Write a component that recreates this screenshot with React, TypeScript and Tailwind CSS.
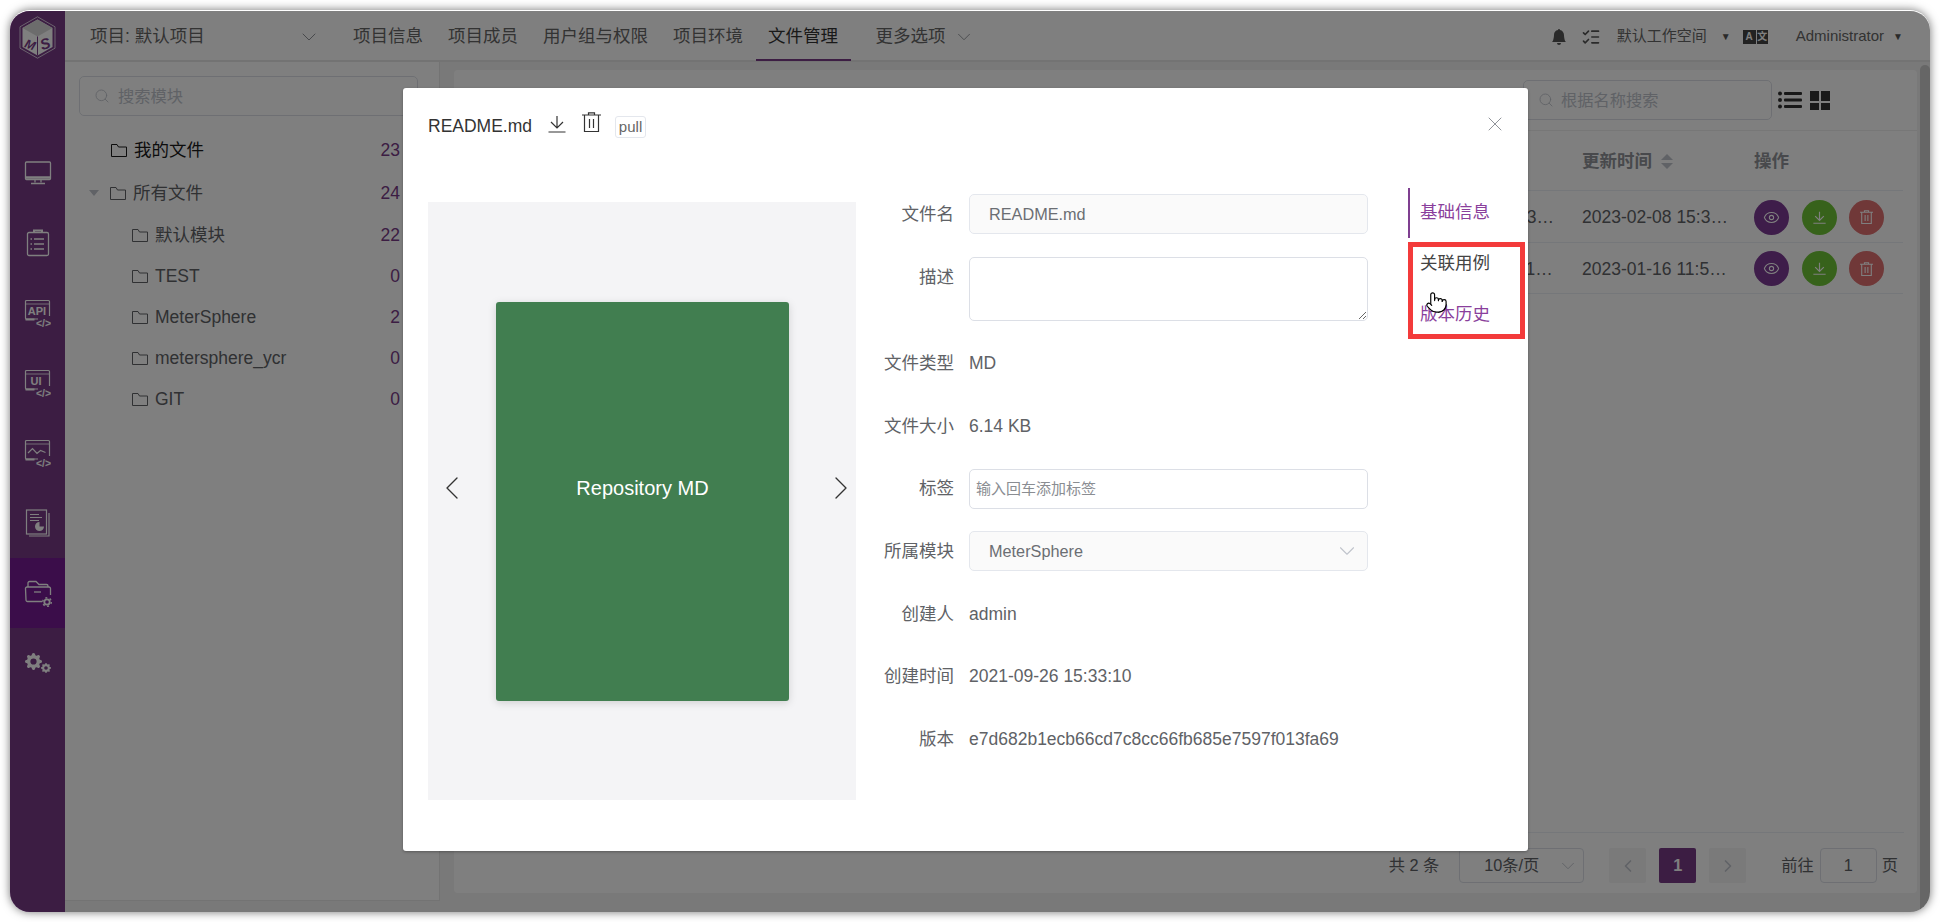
import React from "react";
import { ChevronDown, ChevronLeft, ChevronRight, Eye, ListChecks, Pointer, Search, X } from "lucide-react";
import { BsBellFill, BsGearFill } from "react-icons/bs";

const Frame = ({ children }: { children?: React.ReactNode }) => (
  <svg width="28" height="28" viewBox="0 0 28 28" fill="none" stroke="white" strokeWidth="1.2" className="-ml-[2px]">
    <path d="M15 20H3.5a1 1 0 0 1-1-1V2.500a1 1 0 0 1 1-1h22a1 1 0 0 1 1 1V17" />
    <path d="M2.500 5h24" strokeWidth="0.8" />
    <path d="M2.500 20.500h9" strokeWidth="2" />
    {children}
    <text x="20.500" y="27.500" fontSize="10.500" fontWeight="700" fill="white" stroke="none" textAnchor="middle" fontFamily="Liberation Sans">&lt;/&gt;</text>
  </svg>
);

const navIcons: React.ReactNode[] = [
  <svg width="28" height="24" viewBox="0 0 28 24" fill="none" stroke="white" strokeWidth="1.300">
    <rect x="1.500" y="1" width="25" height="17.500" rx="1" />
    <path d="M1.500 16.500h25" strokeWidth="2.500" />
    <path d="M11 19v2.500M17 19v2.500" />
    <path d="M7 22.500h14" />
  </svg>,
  <svg width="24" height="28" viewBox="0 0 24 28" fill="none" stroke="white" strokeWidth="1.300">
    <rect x="1.500" y="3.500" width="21" height="23" rx="1.500" />
    <path d="M8 3.500V1.500h8v2" strokeWidth="2" />
    <path d="M8 10h10M8 15h10M8 20h10M4.500 10h1.500M4.500 15h1.500M4.500 20h1.500" />
  </svg>,
  <Frame>
    <text x="14" y="15.500" fontSize="11" fontWeight="700" fill="white" stroke="none" textAnchor="middle" fontFamily="Liberation Sans">API</text>
  </Frame>,
  <Frame>
    <text x="13" y="15.500" fontSize="11" fontWeight="700" fill="white" stroke="none" textAnchor="middle" fontFamily="Liberation Sans">UI</text>
  </Frame>,
  <Frame>
    <path d="M5 14l4.500-4.500 4.500 5 3.500-3 5 2" />
  </Frame>,
  <svg width="26" height="28" viewBox="0 0 26 28" fill="none" stroke="white" strokeWidth="1.200">
    <rect x="1.500" y="1" width="20" height="24" />
    <path d="M24 4v23H4" />
    <path d="M5 5.500h9M5 8.500h12M5 11.500h9" />
    <path d="M14.500 13v4.500h4.500a4.500 4.500 0 1 1-4.500-4.500z" fill="white" stroke="none" />
  </svg>,
  <svg width="28" height="28" viewBox="0 0 28 28" fill="none" stroke="white" strokeWidth="1.300">
    <path d="M4 8V4a1.500 1.500 0 0 1 1.500-1.500H12l3 3h7.500A1.500 1.500 0 0 1 24 7v1" />
    <path d="M18 22.500H3.500A1.500 1.500 0 0 1 2 21L1.500 9.500A1.500 1.500 0 0 1 3 8h22a1.500 1.500 0 0 1 1.500 1.500V16" />
    <path d="M10 13h7" />
    <circle cx="23" cy="23" r="2.700" strokeWidth="1.800" />
    <circle cx="23" cy="23" r="4.300" strokeWidth="1.400" strokeDasharray="2 2.500" />
  </svg>,
  <div className="flex items-end">
    <BsGearFill size={17} className="text-white mb-[3px]" />
    <BsGearFill size={10} className="text-white -ml-[1px]" />
  </div>,
];

const Folder = ({ cls }: { cls: string }) => (
  <svg width="16" height="13" viewBox="0 0 16 13" fill="none" stroke="currentColor" strokeWidth="1" className={cls}>
    <path d="M.5 12.500V.5h5.500l1.500 2.500h8v9.500z" />
  </svg>
);

const DownloadGlyph = ({ size, color, sw }: { size: number; color: string; sw: number }) => (
  <svg width={size} height={size} viewBox="0 0 18 18" fill="none" stroke={color} strokeWidth={sw}>
    <path d="M9 1v11M3 7l6 6 6-6M.5 17h17" />
  </svg>
);

const TrashGlyph = ({ w, h, color, sw }: { w: number; h: number; color: string; sw: number }) => (
  <svg width={w} height={h} viewBox="0 0 19 20" fill="none" stroke={color} strokeWidth={sw}>
    <path d="M0 3h19M6.500 3V.8h6V3M2.500 3v16.500h14V3M7.500 7v9M11.500 7v9" />
  </svg>
);

const topNav = [
  { t: "项目信息" },
  { t: "项目成员" },
  { t: "用户组与权限" },
  { t: "项目环境" },
  { t: "文件管理", active: true },
];

const tree = [
  { name: "我的文件", n: "23", top: true, h: "h-[42px]" },
  { name: "所有文件", n: "24", caret: true, h: "h-[44px]" },
  { name: "默认模块", n: "22", child: true, h: "h-[41px]" },
  { name: "TEST", n: "0", child: true, h: "h-[41px]" },
  { name: "MeterSphere", n: "2", child: true, h: "h-[41px]" },
  { name: "metersphere_ycr", n: "0", child: true, h: "h-[41px]" },
  { name: "GIT", n: "0", child: true, h: "h-[41px]" },
];

const rows = [
  { a: "2023-02-08 15:33:21", b: "2023-02-08 15:33:21" },
  { a: "2023-01-16 11:15:02", b: "2023-01-16 11:54:09" },
];

const FormRow = ({ label, children, cls = "h-[40px]" }: { label: string; children: React.ReactNode; cls?: string }) => (
  <div className={`flex mb-[22.600px] ${cls}`}>
    <div className="w-[98px] text-right text-[17.500px] leading-[40px] text-[#606266] whitespace-nowrap">{label}</div>
    <div className="ml-[15px] w-[399px] text-[17.500px] leading-[40px] text-[#606266]">{children}</div>
  </div>
);

export default function App() {
  return (
    <div className="w-[1940px] h-[922px] bg-white pt-[10px] px-[10px] overflow-hidden font-['Liberation_Sans','Noto_Sans_CJK_SC',sans-serif]">
      <div className="relative w-[1920px] h-[902px] rounded-[20px] overflow-hidden border-t border-white flex bg-[#f2f2f2] shadow-[0_0_10px_rgba(0,0,0,0.55)]">
        {/* sidebar */}
        <aside className="w-[55px] shrink-0 bg-[#783b87] flex flex-col">
          <div className="h-[127px] pt-[5px] pl-[9px]">
            <svg width="37" height="43" viewBox="0 0 37 43">
              <path d="M18.500 .8 36 10.800v21.400L18.500 42.200 1 32.200V10.800z" fill="none" stroke="white" strokeWidth="0.700" />
              <path d="M18.500 3.500 33.500 12v19L18.500 39.500 3.500 31V12z" fill="white" />
              <path d="M18.500 3.500 33.500 12 18.500 20.500 3.500 12z" fill="#d9d9d9" />
              <path d="M18.500 20.500v19" stroke="#783b87" strokeWidth="1" />
              <text x="11" y="33" fontSize="12.500" fontWeight="700" fontStyle="italic" fill="#783b87" textAnchor="middle" fontFamily="Liberation Sans" transform="rotate(20 11 29)">M</text>
              <text x="26.500" y="33" fontSize="15" fontWeight="700" fontStyle="italic" fill="#783b87" textAnchor="middle" fontFamily="Liberation Sans" transform="rotate(-18 26 29)">S</text>
            </svg>
          </div>
          {navIcons.map((ic, i) => (
            <div key={i} className={`h-[70px] flex items-center justify-center ${i === 6 ? "bg-[#761b95]" : ""}`}>{ic}</div>
          ))}
        </aside>

        <div className="flex-1 flex flex-col min-w-0">
          {/* header */}
          <header className="h-[51px] shrink-0 bg-white border-b-2 border-[#e6e6e6] flex items-center text-[17.500px] text-[#666]">
            <div className="w-[275.500px] pl-[25px] pt-[2px] flex items-center shrink-0">
              <span>项目: 默认项目</span>
              <ChevronDown size={24} strokeWidth={1} className="ml-[92px] text-[#909399]" />
            </div>
            {topNav.map((n) => (
              <div key={n.t} className={`px-[12.500px] h-[49px] pt-[2px] flex items-center border-b-2 mt-[2px] whitespace-nowrap ${n.active ? "border-[#783b87] text-[#333]" : "border-transparent"}`}>
                {n.t}
              </div>
            ))}
            <div className="pl-[25px] pt-[2px] flex items-center whitespace-nowrap">
              更多选项
              <ChevronDown size={22} strokeWidth={1} className="ml-[7px] text-[#909399]" />
            </div>
            <div className="ml-auto pt-[2px] flex items-center text-[15px] pr-[27px] text-[#666]">
              <BsBellFill size={16} className="text-[#555]" />
              <ListChecks size={20} strokeWidth={2} className="ml-[14px] text-[#555]" />
              <span className="ml-[16px] whitespace-nowrap">默认工作空间</span>
              <span className="ml-[14px] text-[10px] text-[#555]">▼</span>
              <div className="ml-[12px] flex w-[25px] h-[14px] bg-[#444] text-white text-[10px] leading-[14px] text-center font-bold">
                <span className="w-[13px]">A</span>
                <span className="w-[12px] border-l border-white">文</span>
              </div>
              <span className="ml-[28px]">Administrator</span>
              <span className="ml-[9px] text-[10px] text-[#555]">▼</span>
            </div>
          </header>

          <div className="flex-1 flex min-h-0">
            {/* tree pane */}
            <section className="w-[375px] shrink-0 h-[839px] bg-white border-r border-b border-[#e6e6e6] pl-[14px] pr-[21px] pt-[14px]">
              <div className="h-[40px] border border-[#dcdfe6] rounded-[5px] flex items-center pl-[14px] text-[16.250px] text-[#c0c4cc]">
                <Search size={16} strokeWidth={1.300} />
                <span className="ml-[8px]">搜索模块</span>
              </div>
              <div className="mt-[13px] pr-[18px]">
                {tree.map((t) => (
                  <div key={t.name} className={`${t.h} flex items-center text-[17.500px] ${t.top ? "text-[#1a1a1a]" : "text-[#606266]"}`}>
                    <div className={`flex items-center ${t.child ? "pl-[53px]" : t.caret ? "pl-[10px]" : "pl-[32px]"}`}>
                      {t.caret && <span className="w-0 h-0 mr-[11px] border-x-[5px] border-x-transparent border-t-[6px] border-t-[#c0c4cc]" />}
                      <Folder cls="" />
                      <span className="ml-[7px]">{t.name}</span>
                    </div>
                    <span className="ml-auto text-[#783b87]">{t.n}</span>
                  </div>
                ))}
              </div>
            </section>

            {/* main */}
            <main className="flex-1 flex pl-[14px] pt-[8px] min-w-0">
              <div className="w-[1463px] h-[823px] bg-white rounded-[4px] flex flex-col shrink-0">
                <div className="h-[61px] shrink-0 border-b border-[#eee] flex items-center pl-[20px] pr-[87px]">
                  <div className="w-[112px] h-[36px] mt-[12px] border border-[#dcdfe6] rounded-[5px]" />
                  <div className="ml-auto w-[249px] h-[40px] border border-[#dcdfe6] rounded-[5px] flex items-center pl-[14px] text-[16.250px] text-[#c0c4cc]">
                    <Search size={16} strokeWidth={1.300} />
                    <span className="ml-[7px]">根据名称搜索</span>
                  </div>
                  <svg width="24" height="18" viewBox="0 0 24 18" className="ml-[6px]" fill="#333">
                    <circle cx="2" cy="2.500" r="2" /><circle cx="2" cy="9" r="2" /><circle cx="2" cy="15.500" r="2" />
                    <rect x="6" y="1" width="18" height="3" rx="1" /><rect x="6" y="7.500" width="18" height="3" rx="1" /><rect x="6" y="14" width="18" height="3" rx="1" />
                  </svg>
                  <svg width="20" height="19" viewBox="0 0 20 19" className="ml-[8px]" fill="#333">
                    <rect width="9" height="10" /><rect x="11" width="9" height="10" /><rect y="12" width="9" height="7" /><rect x="11" y="12" width="9" height="7" />
                  </svg>
                </div>

                <div className="flex-1 pl-[20px] pr-[14px]">
                  <div className="h-[60px] pt-[2px] border-b border-[#ebeef5] flex items-center text-[17.500px] font-bold text-[#909399]">
                    <div className="w-[174px] ml-auto" />
                    <div className="w-[172px] flex items-center">
                      <span>更新时间</span>
                      <span className="ml-[9px] flex flex-col gap-[3px]">
                        <span className="w-0 h-0 border-x-[6px] border-x-transparent border-b-[6px] border-b-[#c0c4cc]" />
                        <span className="w-0 h-0 border-x-[6px] border-x-transparent border-t-[6px] border-t-[#c0c4cc]" />
                      </span>
                    </div>
                    <div className="w-[149px]">操作</div>
                  </div>
                  {rows.map((r) => (
                    <div key={r.b} className="h-[51.500px] pt-[2px] border-b border-[#ebeef5] flex items-center text-[17.500px] text-[#606266]">
                      <div className="w-[174px] ml-auto"><div className="w-[146px] truncate">{r.a}</div></div>
                      <div className="w-[172px]"><div className="w-[146px] truncate">{r.b}</div></div>
                      <div className="w-[149px] flex gap-[12.500px]">
                        <span className="w-[35px] h-[35px] rounded-full bg-[#7c3a94] flex items-center justify-center">
                          <Eye size={17} strokeWidth={1.500} className="text-white" />
                        </span>
                        <span className="w-[35px] h-[35px] rounded-full bg-[#6fc437] flex items-center justify-center">
                          <DownloadGlyph size={13} color="#fff" sw={1.600} />
                        </span>
                        <span className="w-[35px] h-[35px] rounded-full bg-[#e07070] flex items-center justify-center">
                          <TrashGlyph w={13} h={14} color="#fff" sw={1.600} />
                        </span>
                      </div>
                    </div>
                  ))}
                </div>

                <div className="h-[61px] shrink-0 mr-[13px] border-t border-[#ebeef5] pt-[15px] pr-[6px] flex items-start justify-end text-[16.250px] text-[#606266]">
                  <span className="leading-[35px] whitespace-nowrap">共 2 条</span>
                  <div className="ml-[20px] w-[125px] h-[35px] border border-[#dcdfe6] rounded-[4px] flex items-center pl-[24px] pr-[4px] justify-between">
                    <span>10条/页</span>
                    <ChevronDown size={22} strokeWidth={1} className="text-[#c0c4cc]" />
                  </div>
                  <div className="ml-[25px] w-[37px] h-[35px] bg-[#f4f4f5] rounded-[2px] flex items-center justify-center text-[#c0c4cc]"><ChevronLeft size={20} /></div>
                  <div className="ml-[13px] w-[37px] h-[35px] bg-[#783b87] rounded-[2px] flex items-center justify-center text-white font-bold">1</div>
                  <div className="ml-[13px] w-[37px] h-[35px] bg-[#f4f4f5] rounded-[2px] flex items-center justify-center text-[#c0c4cc]"><ChevronRight size={20} /></div>
                  <span className="ml-[35px] leading-[35px] whitespace-nowrap">前往</span>
                  <div className="ml-[6px] w-[57px] h-[35px] border border-[#dcdfe6] rounded-[4px] flex items-center justify-center">1</div>
                  <span className="ml-[5px] leading-[35px]">页</span>
                </div>
              </div>
              <div className="ml-[3px] w-[10px] mt-[-5px] bg-[#ccc] rounded-t-[5px] shrink-0" />
            </main>
          </div>
        </div>

        {/* modal mask */}
        <div className="absolute inset-0 bg-black/50" />

        {/* modal */}
        <div className="absolute left-[393px] top-[77px] w-[1125px] h-[763px] bg-white rounded-[3px] shadow-[0_1px_3px_rgba(0,0,0,0.3)] px-[25px]">
          <div className="h-[106px] pt-[25px] flex items-start">
            <div className="flex items-center h-[26px]">
              <span className="text-[17.500px] text-[#333] leading-[26px]">README.md</span>
              <span className="ml-[16px] -mt-[5px]"><DownloadGlyph size={18} color="#333" sw={1.200} /></span>
              <span className="ml-[16px] -mt-[8px]"><TrashGlyph w={19} h={20} color="#333" sw={1.200} /></span>
              <span className="ml-[14px] h-[22px] w-[31px] mt-[1px] border border-[#e4e7ed] rounded-[3px] text-[15px] leading-[20px] text-center text-[#666]">pull</span>
            </div>
            <X size={24} strokeWidth={1} className="ml-auto -mr-[4px] -mt-[1px] text-[#909399]" />
          </div>

          <div className="flex items-start">
            <div className="mt-[8px] w-[428px] h-[598px] shrink-0 bg-[#f4f4f6] flex items-center pl-[3.500px]">
              <ChevronLeft size={40} strokeWidth={0.800} className="shrink-0 mb-[26px] text-[#333]" />
              <div className="ml-[24.500px] w-[293px] h-[399px] shrink-0 bg-[#417e50] rounded-[3px] shadow-[0_2px_8px_rgba(0,0,0,0.15)] flex items-center justify-center pb-[26px] text-white text-[20px]">
                Repository MD
              </div>
              <ChevronRight size={40} strokeWidth={0.800} className="shrink-0 ml-[32px] mb-[26px] text-[#333]" />
            </div>

            <div className="w-[512px] shrink-0">
              <FormRow label="文件名">
                <div className="h-[40px] bg-[#fafafa] border border-[#e4e7ed] rounded-[5px] pl-[19px] text-[16.250px] leading-[38px] text-[#6b6e73]">README.md</div>
              </FormRow>
              <FormRow label="描述" cls="h-[64px]">
                <textarea className="block w-[399px] h-[64px] border border-[#dcdfe6] rounded-[5px] outline-none resize-y" />
              </FormRow>
              <FormRow label="文件类型">MD</FormRow>
              <FormRow label="文件大小">6.14 KB</FormRow>
              <FormRow label="标签">
                <input placeholder="输入回车添加标签" className="w-[399px] h-[40px] border border-[#dcdfe6] rounded-[5px] pl-[6px] text-[15px] outline-none placeholder:text-[#8a8d92]" />
              </FormRow>
              <FormRow label="所属模块">
                <div className="h-[40px] bg-[#fafafa] border border-[#e4e7ed] rounded-[5px] pl-[19px] pr-[7px] flex items-center justify-between text-[16.250px] text-[#6b6e73]">
                  <span>MeterSphere</span>
                  <ChevronDown size={26} strokeWidth={1} className="text-[#c0c4cc]" />
                </div>
              </FormRow>
              <FormRow label="创建人">admin</FormRow>
              <FormRow label="创建时间">2021-09-26 15:33:10</FormRow>
              <FormRow label="版本">e7d682b1ecb66cd7c8cc66fb685e7597f013fa69</FormRow>
            </div>

            <nav className="ml-[40px] -mt-[6px] w-[95px] text-[17.500px]">
              <div className="h-[50px] border-l-2 border-[#7f3f90] pl-[10px] leading-[48px] text-[#8a3f9c]">基础信息</div>
              <div className="h-[51px] pl-[12px] leading-[50px] text-[#444]">关联用例</div>
              <div className="h-[50px] pl-[12px] leading-[50px] text-[#8a3f9c]">版本历史</div>
            </nav>
          </div>

          {/* annotation */}
          <div className="absolute left-[1005px] top-[154px] w-[117px] h-[97px] border-[5px] border-[#f33b3b]" />
          <Pointer size={23} strokeWidth={1.200} className="absolute left-[1022px] top-[203px] text-black fill-white" />
        </div>
      </div>
    </div>
  );
}
